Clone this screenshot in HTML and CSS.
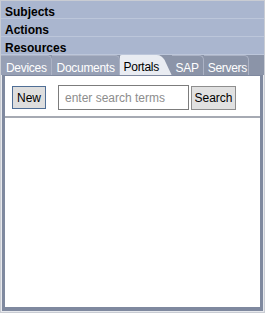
FILE: index.html
```html
<!DOCTYPE html>
<html lang="en">
<head>
  <meta charset="UTF-8">
  <title>Resources</title>
  <link rel="stylesheet" href="styles.css">
</head>
<body>
  <div class="frame">
    <div class="section">Subjects</div>
    <div class="section">Actions</div>
    <div class="section">Resources</div>

    <div class="tabs">
      <div class="tab">Devices</div>
      <div class="tab">Documents</div>
      <div class="tab active">Portals</div>
      <div class="tab after-active">SAP</div>
      <div class="tab">Servers</div>
    </div>

    <div class="panel">
      <div class="toolbar">
        <button class="btn btn-default">New</button>
        <input class="search-input" type="text" placeholder="enter search terms">
        <button class="btn btn-search">Search</button>
      </div>
      <div class="list"></div>
    </div>
  </div>
</body>
</html>
```

FILE: styles.css
```css
:root {
  --frame-border: #c9ccd3;
  --frame-bg: #e8eaee;
  --section-bg: #aab6cf;
  --section-line: #bcc6da;
  --strip-bg: #8b94a8;
  --tab-bg: #97a0b5;
  --tab-line: #acb3c5;
  --tab-active: #e9ecf2;
  --panel-border: #7f899f;
  --rule: #a6aab3;
}

body {
  margin: 0;
  font-family: "Liberation Sans", Arial, sans-serif;
  font-size: 12px;
  color: #000;
}

.frame {
  width: 265px;
  height: 313px;
  box-sizing: border-box;
  border: 1px solid var(--frame-border);
  background-color: var(--frame-bg);
  display: flex;
  flex-direction: column;
}

.section {
  height: 18px;
  box-sizing: border-box;
  padding: 5px 0 0 4px;
  background-color: var(--section-bg);
  border-bottom: 1px solid var(--section-line);
  font-size: 12px;
  font-weight: bold;
  line-height: 12px;
}

.tabs {
  display: flex;
  height: 20px;
  flex-shrink: 0;
  background-color: var(--strip-bg);
}

.tab {
  padding: 4px 4px 0 5px;
  line-height: 16px;
  letter-spacing: -0.3px;
  color: #fff;
  background-color: var(--tab-bg);
  border-top: 1px solid var(--tab-line);
  border-right: 1px solid var(--tab-line);
  border-top-right-radius: 5px;
  box-sizing: border-box;
}

.tab.active {
  width: 52px;
  padding: 4px 0 0 4px;
  color: #000;
  background-color: var(--tab-active);
  border: none;
  border-radius: 0;
  clip-path: path('M0 20 L0 2 Q0 0 2 0 L37 0 C41 0 43 2 45 5 L52 20 Z');
}

.tab.after-active {
  padding: 4px 4px 0 4px;
  background-color: var(--strip-bg);
}

.tab:last-child {
  padding: 4px 1px 0 4px;
  background-color: var(--strip-bg);
}

.panel {
  flex: 1;
  display: flex;
  flex-direction: column;
  margin: 0 1px 1px;
  background-color: #fff;
  border: 3px solid var(--panel-border);
  border-top-width: 1px;
  border-bottom-width: 4px;
}

.toolbar {
  display: flex;
  align-items: center;
  padding: 9px 0 6px 7px;
}

.btn {
  height: 23px;
  padding: 0;
  font-family: inherit;
  font-size: 12px;
  color: #000;
  background-color: #dedede;
  border: 1px solid #8e8e8e;
}

.btn-default {
  width: 34px;
  border-color: #4f6e96;
}

.btn-search {
  width: 45px;
  height: 24px;
  margin-left: 2px;
  background-color: #e1e1e1;
}

.search-input {
  width: 131px;
  height: 25px;
  box-sizing: border-box;
  margin: 0 0 0 12px;
  padding: 0 6px;
  font-family: inherit;
  font-size: 12px;
  border: 1px solid #7c7c7c;
  outline: none;
}

.search-input::placeholder {
  color: #8d8d8d;
}

.list {
  flex: 1;
  border-top: 2px solid var(--rule);
}
```
